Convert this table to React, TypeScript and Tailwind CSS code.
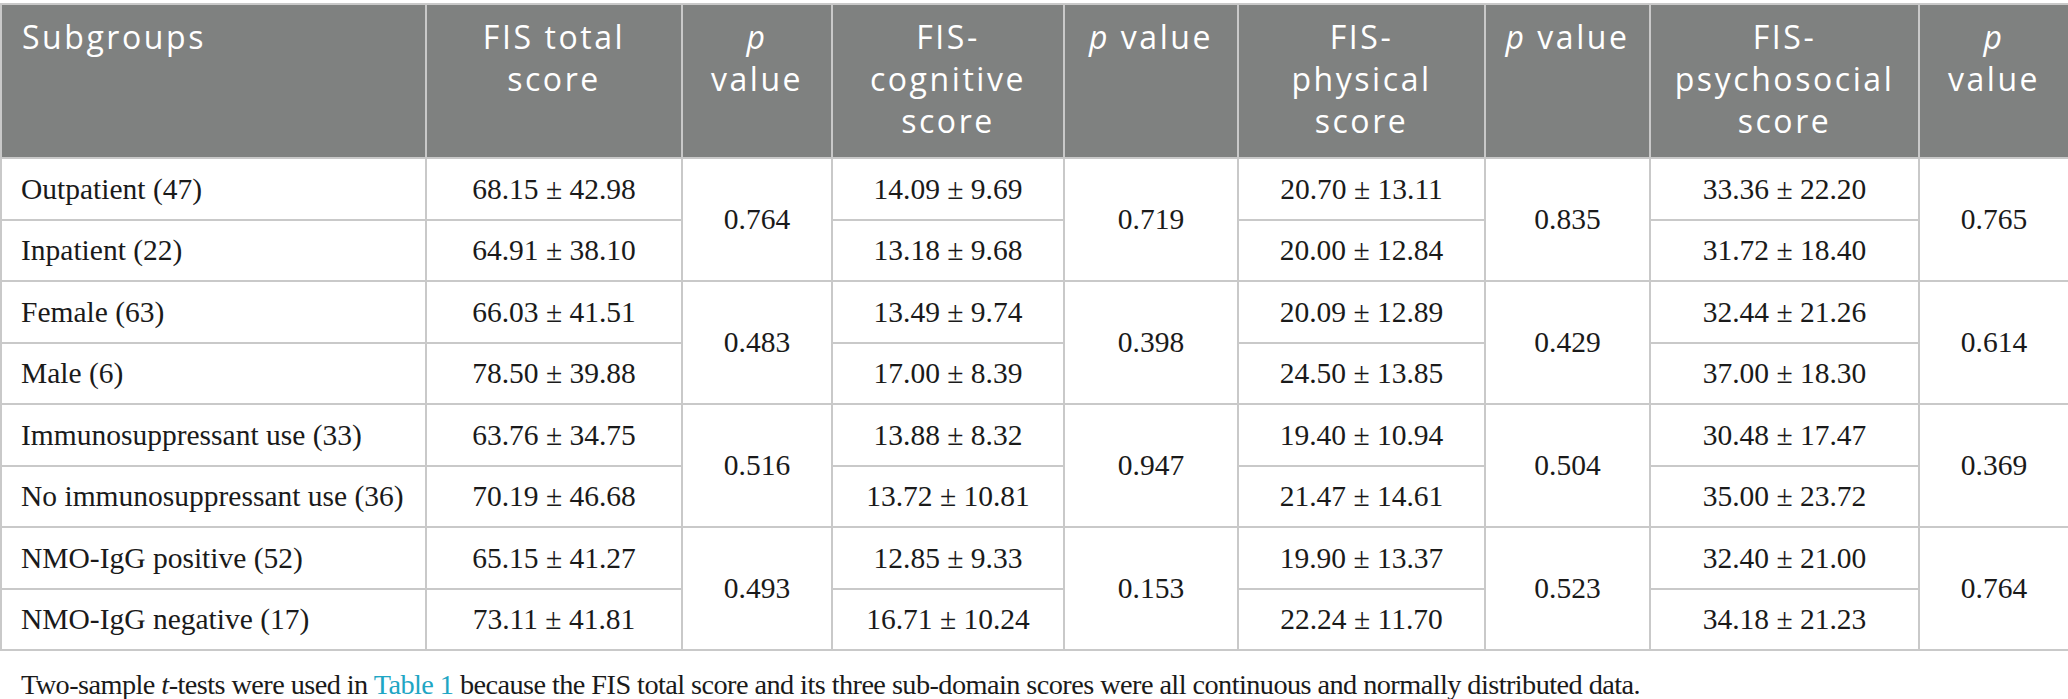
import React from "react";

type Row = {
  label: string;
  total: string;
  cog: string;
  phys: string;
  psy: string;
};

type Group = {
  rows: [Row, Row];
  p: [string, string, string, string];
};

const groups: Group[] = [
  {
    rows: [
      { label: "Outpatient (47)", total: "68.15 ± 42.98", cog: "14.09 ± 9.69", phys: "20.70 ± 13.11", psy: "33.36 ± 22.20" },
      { label: "Inpatient (22)", total: "64.91 ± 38.10", cog: "13.18 ± 9.68", phys: "20.00 ± 12.84", psy: "31.72 ± 18.40" },
    ],
    p: ["0.764", "0.719", "0.835", "0.765"],
  },
  {
    rows: [
      { label: "Female (63)", total: "66.03 ± 41.51", cog: "13.49 ± 9.74", phys: "20.09 ± 12.89", psy: "32.44 ± 21.26" },
      { label: "Male (6)", total: "78.50 ± 39.88", cog: "17.00 ± 8.39", phys: "24.50 ± 13.85", psy: "37.00 ± 18.30" },
    ],
    p: ["0.483", "0.398", "0.429", "0.614"],
  },
  {
    rows: [
      { label: "Immunosuppressant use (33)", total: "63.76 ± 34.75", cog: "13.88 ± 8.32", phys: "19.40 ± 10.94", psy: "30.48 ± 17.47" },
      { label: "No immunosuppressant use (36)", total: "70.19 ± 46.68", cog: "13.72 ± 10.81", phys: "21.47 ± 14.61", psy: "35.00 ± 23.72" },
    ],
    p: ["0.516", "0.947", "0.504", "0.369"],
  },
  {
    rows: [
      { label: "NMO-IgG positive (52)", total: "65.15 ± 41.27", cog: "12.85 ± 9.33", phys: "19.90 ± 13.37", psy: "32.40 ± 21.00" },
      { label: "NMO-IgG negative (17)", total: "73.11 ± 41.81", cog: "16.71 ± 10.24", phys: "22.24 ± 11.70", psy: "34.18 ± 21.23" },
    ],
    p: ["0.493", "0.153", "0.523", "0.764"],
  },
];

const th =
  "align-top text-center font-normal border-2 border-[#c9c9c9] pt-[11px] pb-2";
const td = "h-[61.5px] p-0 text-center align-middle border-2 border-[#c9c9c9]";

const P = () => <span className="italic">p</span>;

export default function App() {
  return (
    <div className="w-[2068px] bg-white pt-[3px]">
      <table
        className="w-[2068px] table-fixed border-collapse"
        style={{ fontFamily: '"Liberation Serif", "Times New Roman", serif' }}
      >
        <colgroup>
          <col className="w-[425px]" />
          <col className="w-[256px]" />
          <col className="w-[150px]" />
          <col className="w-[232px]" />
          <col className="w-[174px]" />
          <col className="w-[247px]" />
          <col className="w-[165px]" />
          <col className="w-[269px]" />
          <col className="w-[150px]" />
        </colgroup>
        <thead>
          <tr
            className="h-[154px] bg-[#7f8180] text-white text-[32px] leading-[42px] tracking-[0.08em]"
            style={{ fontFamily: '"Open Sans", "Noto Sans", sans-serif' }}
          >
            <th className={th + " text-left pl-[20px]"}>Subgroups</th>
            <th className={th}>
              FIS total
              <br />
              score
            </th>
            <th className={th}>
              <P />
              <br />
              value
            </th>
            <th className={th}>
              FIS-
              <br />
              cognitive
              <br />
              score
            </th>
            <th className={th}>
              <P /> value
            </th>
            <th className={th}>
              FIS-
              <br />
              physical
              <br />
              score
            </th>
            <th className={th}>
              <P /> value
            </th>
            <th className={th}>
              FIS-
              <br />
              psychosocial
              <br />
              score
            </th>
            <th className={th}>
              <P />
              <br />
              value
            </th>
          </tr>
        </thead>
        <tbody className="text-[29.5px] text-[#1a1a1a]">
          {groups.map((g) =>
            g.rows.map((r, i) => (
              <tr key={r.label}>
                <td className={td + " text-left pl-[19px]"}>{r.label}</td>
                <td className={td}>{r.total}</td>
                {i === 0 && (
                  <td rowSpan={2} className={td}>
                    {g.p[0]}
                  </td>
                )}
                <td className={td}>{r.cog}</td>
                {i === 0 && (
                  <td rowSpan={2} className={td}>
                    {g.p[1]}
                  </td>
                )}
                <td className={td}>{r.phys}</td>
                {i === 0 && (
                  <td rowSpan={2} className={td}>
                    {g.p[2]}
                  </td>
                )}
                <td className={td}>{r.psy}</td>
                {i === 0 && (
                  <td rowSpan={2} className={td}>
                    {g.p[3]}
                  </td>
                )}
              </tr>
            ))
          )}
        </tbody>
      </table>
      <p
        className="pl-[21px] pt-[14px] text-[28.3px] leading-[40px] text-[#1a1a1a] tracking-[-0.02em]"
        style={{ fontFamily: '"Liberation Serif", "Times New Roman", serif' }}
      >
        Two-sample <span className="italic">t</span>-tests were used in{" "}
        <span className="text-[#1fa6c4]">Table 1</span> because the FIS total
        score and its three sub-domain scores were all continuous and normally
        distributed data.
      </p>
    </div>
  );
}
